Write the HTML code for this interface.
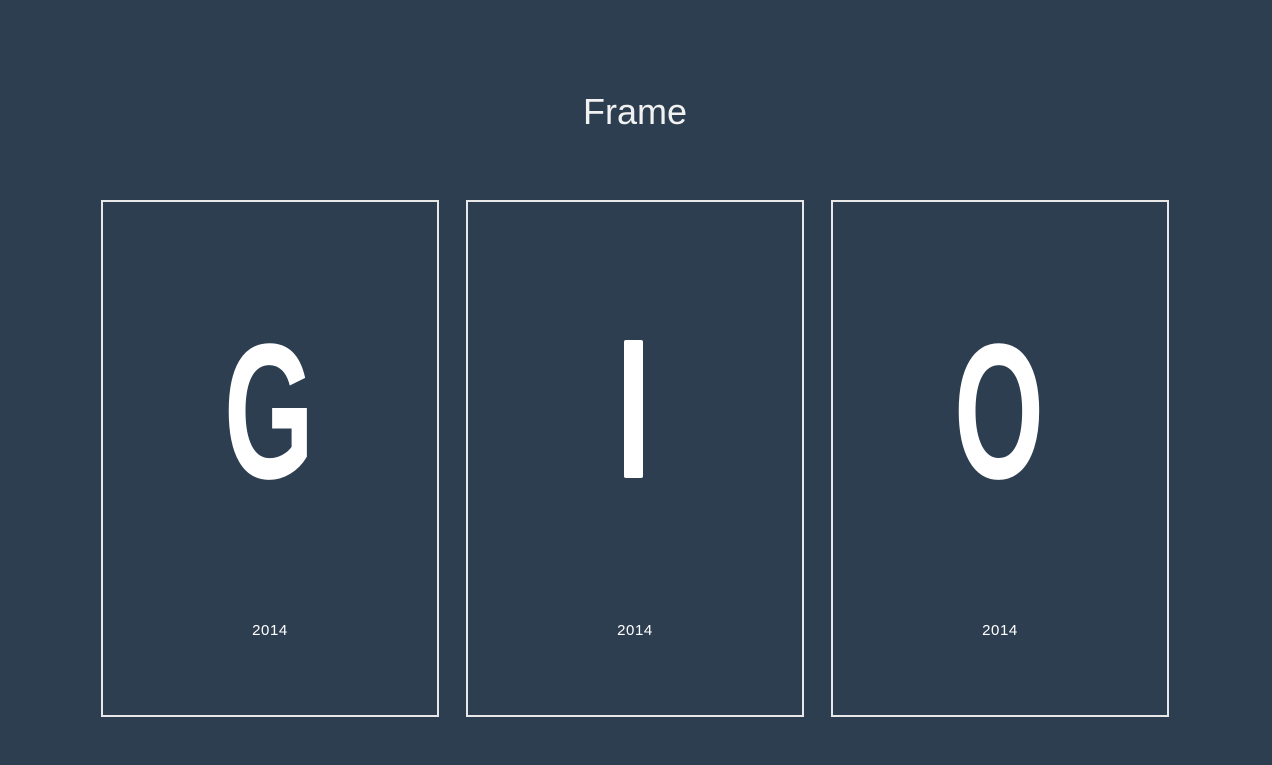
<!DOCTYPE html>
<html><head><style>html,body{margin:0;padding:0;background:#2d3e50;width:1272px;height:765px;overflow:hidden}</style></head>
<body>
<svg width="1272" height="765" xmlns="http://www.w3.org/2000/svg" style="display:block">
<rect width="1272" height="765" fill="#2d3e50"/>
<text x="635" y="124" fill="#f2f2f2" font-family="Liberation Sans, sans-serif" font-size="36" text-anchor="middle">Frame</text>
<g fill="none" stroke="#e8e8e8" stroke-width="2">
<rect x="102" y="201" width="336" height="515"/>
<rect x="467" y="201" width="336" height="515"/>
<rect x="832" y="201" width="336" height="515"/>
</g>
<g fill="#ffffff" font-family="Liberation Sans, sans-serif" font-weight="bold" font-size="193" text-anchor="middle">
<text transform="translate(269,478) scale(0.6,1)">G</text>
<text transform="translate(999,478) scale(0.6,1)">O</text>
</g>
<rect x="624" y="340" width="19" height="138" rx="2" fill="#ffffff"/>
<g fill="#ffffff" font-family="Liberation Sans, sans-serif" font-size="15" letter-spacing="0.6" text-anchor="middle">
<text x="270" y="635">2014</text>
<text x="635" y="635">2014</text>
<text x="1000" y="635">2014</text>
</g>
</svg>
</body></html>
